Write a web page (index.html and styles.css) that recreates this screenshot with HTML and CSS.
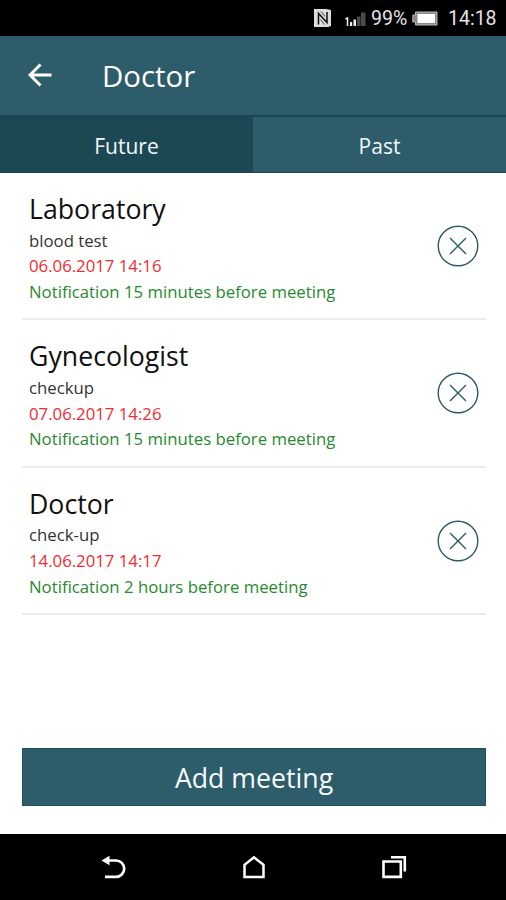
FILE: index.html
```html
<!DOCTYPE html>
<html lang="en">
<head>
<meta charset="utf-8">
<title>Doctor</title>
<link rel="stylesheet" href="styles.css">
</head>
<body>
<div class="screen">
  <div class="status">
    <svg class="nfc" width="18" height="18" viewBox="0 0 18 18"><path d="M0 0h12l5 1v16l-3 1H0z" fill="#ddd"/><path d="M4.500 15.500V4.500l8.500 9V3" fill="none" stroke="#111" stroke-width="1.500"/><path d="M7 2.500l4 5M6.500 10.500l4 5" stroke="#444" stroke-width="1"/></svg>
    <svg class="signal" width="22" height="16" viewBox="0 0 22 16"><path d="M.5 8l2-1v8" fill="none" stroke="#eee" stroke-width="1.500"/><path d="M5 11h2.200v4H5zM8.500 8.500h2.500V15H8.500z" fill="#eee"/><path d="M12 5.500h3.500V15H12zM16 1.500h4.500V15H16z" fill="#4a4a4a"/></svg>
    <span class="percent">99%</span>
    <svg class="battery" width="26" height="15" viewBox="0 0 26 15"><path d="M3.500 1H25v13H3.500v-3H.8V4h2.700z" fill="#888" stroke="#bbb"/><rect x="5.500" y="3" width="17.500" height="9" fill="#fff"/></svg>
    <span class="time">14:18</span>
  </div>
  <header class="bar">
    <svg class="back" width="24" height="24" viewBox="0 0 24 24"><path d="M12.500 1.500L2 12l10.500 10.500M2 12h21.500" fill="none" stroke="#fff" stroke-width="2.900"/></svg>
    <h1 class="heading">Doctor</h1>
  </header>
  <nav class="tabs">
    <div class="tab active">Future</div>
    <div class="tab">Past</div>
  </nav>
  <main class="list">
    <article class="item">
      <div class="info">
        <h2 class="title">Laboratory</h2>
        <p class="line">blood test</p>
        <p class="line date">06.06.2017 14:16</p>
        <p class="line note">Notification 15 minutes before meeting</p>
      </div>
      <svg class="remove" width="42" height="42" viewBox="0 0 42 42"><circle cx="21" cy="21" r="19.800"/><path d="M13 13l16 16M29 13L13 29"/></svg>
    </article>
    <article class="item">
      <div class="info">
        <h2 class="title">Gynecologist</h2>
        <p class="line">checkup</p>
        <p class="line date">07.06.2017 14:26</p>
        <p class="line note">Notification 15 minutes before meeting</p>
      </div>
      <svg class="remove" width="42" height="42" viewBox="0 0 42 42"><circle cx="21" cy="21" r="19.800"/><path d="M13 13l16 16M29 13L13 29"/></svg>
    </article>
    <article class="item">
      <div class="info">
        <h2 class="title">Doctor</h2>
        <p class="line">check-up</p>
        <p class="line date">14.06.2017 14:17</p>
        <p class="line note">Notification 2 hours before meeting</p>
      </div>
      <svg class="remove" width="42" height="42" viewBox="0 0 42 42"><circle cx="21" cy="21" r="19.800"/><path d="M13 13l16 16M29 13L13 29"/></svg>
    </article>
  </main>
  <button class="add">Add meeting</button>
  <footer class="softkeys">
    <svg width="28" height="28" viewBox="0 0 28 28"><path d="M7 7.500h9a8.200 8.200 0 0 1 0 16.400H5" fill="none" stroke="#fff" stroke-width="2.700"/><path d="M1.500 7.500L9.500 2.800v9.400z" fill="#fff"/></svg>
    <svg width="28" height="28" viewBox="0 0 28 28"><path d="M4.500 23.900V11.800L14 4.300l9.500 7.500v12.100z" fill="none" stroke="#fff" stroke-width="2.500"/></svg>
    <svg width="28" height="28" viewBox="0 0 28 28"><path d="M3.500 8.500h17.300v15.400H3.500zM11 4.300h13.800v14.200" fill="none" stroke="#fff" stroke-width="2.600"/></svg>
  </footer>
</div>
</body>
</html>
```
FILE: styles.css
```css
* { box-sizing: border-box; margin: 0; padding: 0; }
body { font-family: "Open Sans", sans-serif; background: #fff; color: #111; }
h1, h2 { font-weight: 400; }
svg { display: block; flex: none; }
.screen { width: 506px; height: 900px; display: flex; flex-direction: column; overflow: hidden; }
.status { height: 36px; background: #000; color: #e4e4e4; display: flex; align-items: center; justify-content: flex-end; padding: 1px 10px 0 0; font: 20px/36px Roboto, sans-serif; }
.nfc { margin-top: -1px; }
.signal { margin-left: 13px; }
.percent { margin-left: 4px; width: 36px; font-size: 19.500px; white-space: nowrap; }
.battery { margin-left: 5px; margin-top: -1px; }
.time { margin-left: 10px; width: 48px; font-size: 19.500px; white-space: nowrap; }
.bar { height: 79px; background: #2d5c6a; color: #fff; display: flex; align-items: center; padding-left: 28px; }
.back { margin-top: -1px; }
.heading { margin-left: 50px; font-size: 29.400px; line-height: 40px; }
.tabs { height: 58px; display: flex; background: #2d5c6a; border-top: 2px solid #1c4854; border-bottom: 1px solid #1c4854; }
.tab { flex: 1; color: #f2f7fa; font-size: 21px; line-height: 58px; text-align: center; }
.active { background: #1c4854; }
.list { margin: 0 20px 0 22px; flex: 1; }
.item { height: 147.300px; border-bottom: 2px solid #ececec; display: flex; justify-content: space-between; padding: 18px 7px 0; }
.title { font-size: 26.700px; line-height: 36.300px; white-space: nowrap; }
.line { font-size: 16.750px; line-height: 25.700px; white-space: nowrap; color: #333; }
.title + .line { margin-top: .3px; }
.line.date { color: #f32b30; }
.line.note { color: #278a2c; }
.remove { margin-top: 34.200px; fill: none; stroke: #2b5968; stroke-width: 1.400; }
.add { height: 58px; margin: 0 20px 28px 22px; border: 1px solid #1c5060; background: #2d5c6a; color: #f7fbff; font: 26.700px/54px "Open Sans", sans-serif; padding-top: 1px; }
.softkeys { height: 66px; background: #000; display: flex; justify-content: space-between; align-items: center; padding: 0 98px 0 100px; }
```
